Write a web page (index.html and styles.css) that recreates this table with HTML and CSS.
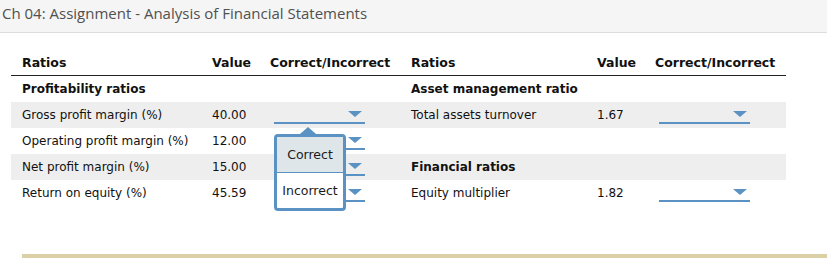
FILE: index.html
```html
<!DOCTYPE html>
<html>
<head>
<meta charset="utf-8">
<link rel="stylesheet" href="styles.css">
</head>
<body>
<div class="titlebar">Ch 04: Assignment - Analysis of Financial Statements</div>
<table class="ratios">
  <colgroup>
    <col class="c-name"><col class="c-val"><col class="c-sel">
    <col class="c-name2"><col class="c-val"><col class="c-sel2">
  </colgroup>
  <thead>
    <tr>
      <th>Ratios</th><th>Value</th><th>Correct/Incorrect</th>
      <th>Ratios</th><th>Value</th><th>Correct/Incorrect</th>
    </tr>
  </thead>
  <tbody>
    <tr>
      <td class="group">Profitability ratios</td><td></td><td></td>
      <td class="group">Asset management ratio</td><td></td><td></td>
    </tr>
    <tr class="shade">
      <td>Gross profit margin (%)</td><td>40.00</td>
      <td><div class="dropdown open"><span class="arrow"></span>
        <div class="popup">
          <div class="opt opt-active">Correct</div>
          <div class="opt">Incorrect</div>
        </div>
      </div></td>
      <td>Total assets turnover</td><td>1.67</td>
      <td><div class="dropdown"><span class="arrow"></span></div></td>
    </tr>
    <tr>
      <td>Operating profit margin (%)</td><td>12.00</td>
      <td><div class="dropdown"><span class="arrow"></span></div></td>
      <td></td><td></td><td></td>
    </tr>
    <tr class="shade">
      <td>Net profit margin (%)</td><td>15.00</td>
      <td><div class="dropdown"><span class="arrow"></span></div></td>
      <td class="group">Financial ratios</td><td></td><td></td>
    </tr>
    <tr>
      <td>Return on equity (%)</td><td>45.59</td>
      <td><div class="dropdown"><span class="arrow"></span></div></td>
      <td>Equity multiplier</td><td>1.82</td>
      <td><div class="dropdown"><span class="arrow"></span></div></td>
    </tr>
  </tbody>
</table>
<div class="footer-rule"></div>
</body>
</html>
```
FILE: styles.css
```css
html, body {
  margin: 0;
  padding: 0;
  background: #ffffff;
}

.titlebar {
  box-sizing: border-box;
  height: 33px;
  padding: 2px 0 0 2px;
  background: #f5f5f5;
  border-bottom: 1px solid #dddddd;
  font-family: "Open Sans", sans-serif;
  font-size: 15px;
  line-height: 22px;
  color: #505050;
}

.ratios {
  margin: 17px 0 0 11px;
  border-collapse: collapse;
  table-layout: fixed;
  width: 775px;
  font-family: "DejaVu Sans", Verdana, sans-serif;
  font-size: 12px;
  color: #111111;
}

.c-name { width: 190px; }
.c-val { width: 58px; }
.c-sel { width: 141px; }
.c-name2 { width: 186px; }
.c-sel2 { width: 142px; }

.ratios th {
  height: 25px;
  padding: 0 11px;
  text-align: left;
  font-weight: bold;
  font-size: 12.5px;
  vertical-align: middle;
  border-bottom: 1px solid #222222;
  white-space: nowrap;
}

.ratios td {
  height: 26px;
  padding: 0 11px;
  vertical-align: middle;
  white-space: nowrap;
}

.ratios td.group {
  font-weight: bold;
  font-size: 12px;
}

.ratios tr.shade td {
  background: #eeeeee;
}

.dropdown {
  position: relative;
  box-sizing: border-box;
  width: 91px;
  height: 14px;
  margin: 4px 0 0 4px;
  border-bottom: 2px solid #5a92c3;
  display: flex;
  justify-content: flex-end;
  align-items: flex-start;
  padding: 1px 3px 0 0;
}

.arrow {
  width: 0;
  height: 0;
  border-left: 7px solid transparent;
  border-right: 7px solid transparent;
  border-top: 6px solid #5a92c3;
}

.popup {
  position: absolute;
  left: 0;
  top: calc(100% + 12px);
  z-index: 2;
  width: 66px;
  border: 3px solid #5a92c3;
  border-radius: 4px;
  background: #ffffff;
  font-size: 12.5px;
  color: #1a1a1a;
}

.popup::before {
  content: "";
  position: absolute;
  top: -10px;
  left: 23px;
  width: 0;
  height: 0;
  border-left: 8px solid transparent;
  border-right: 8px solid transparent;
  border-bottom: 7px solid #5a92c3;
}

.opt {
  height: 35px;
  display: flex;
  align-items: center;
  justify-content: center;
}

.opt-active {
  background: #dfe6ea;
  border-bottom: 1px solid #5a92c3;
}

.footer-rule {
  margin: 48px 0 0 22px;
  height: 4px;
  background: #dbcfa6;
}
```
